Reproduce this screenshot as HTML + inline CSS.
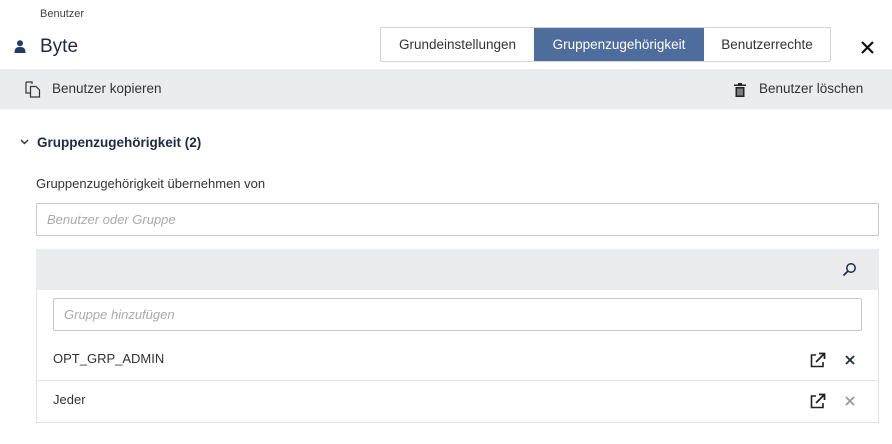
<!DOCTYPE html>
<html><head><meta charset="utf-8"><style>
*{box-sizing:border-box;margin:0;padding:0}
body{width:892px;height:444px;background:#fff;font-family:"Liberation Sans",sans-serif;color:#2a2a2a;position:relative;overflow:hidden;font-size:13px}
.a{position:absolute}
.tabs{left:380px;top:27px;height:35px;display:flex;border:1px solid #d4d4d4;border-radius:2px}
.tabs div{text-align:center;line-height:33px;font-size:13.5px;color:#333}
.tabs .on{background:#4f6d9c;color:#fff}
.bar{left:0;top:69px;width:892px;height:40px;background:#ebeced}
.inp{border:1px solid #c8c8c8;border-radius:2px;height:33px;font-style:italic;color:#aaa;font-size:13px;padding-left:10px;line-height:31px}
</style></head><body>
<div class="a" style="left:40px;top:8px;font-size:11px;color:#444">Benutzer</div>
<svg class="a" style="left:14px;top:40px" width="12" height="13" viewBox="0 0 12 13"><circle cx="6" cy="3.3" r="3" fill="#1f3d66"/><path d="M0.5 13 C0.5 8 2.5 7 6 7 C9.5 7 11.5 8 11.5 13Z" fill="#1f3d66"/></svg>
<div class="a" style="left:40px;top:36px;font-size:19px;color:#1e2b44">Byte</div>
<div class="a tabs"><div style="width:153px">Grundeinstellungen</div><div class="on" style="width:170px">Gruppenzugehörigkeit</div><div style="width:126px">Benutzerrechte</div></div>
<svg class="a" style="left:860px;top:40px" width="15" height="15" viewBox="0 0 15 15"><path d="M2 2L13 13M13 2L2 13" stroke="#111" stroke-width="2.2"/></svg>
<div class="a bar"></div>
<svg class="a" style="left:25px;top:81px" width="16" height="17" viewBox="0 0 16 17"><path d="M1 1H7V3M1 1V12H5" fill="none" stroke="#333" stroke-width="1.2"/><path d="M5.5 5.5H11L14.5 9V16H5.5Z" fill="none" stroke="#333" stroke-width="1.2"/></svg>
<div class="a" style="left:52px;top:81px;font-size:13.5px;color:#333">Benutzer kopieren</div>
<svg class="a" style="left:734px;top:83px" width="12" height="14" viewBox="0 0 12 14"><rect x="0" y="1.5" width="12" height="1.5" fill="#222"/><rect x="4" y="0" width="4" height="2" fill="#222"/><path d="M1.5 4H10.5V14H1.5Z" fill="#222"/><path d="M4 5.5V12.5M6 5.5V12.5M8 5.5V12.5" stroke="#ebeced" stroke-width="0.9"/></svg>
<div class="a" style="left:759px;top:81px;font-size:13.5px;color:#333">Benutzer löschen</div>
<svg class="a" style="left:20px;top:139px" width="9" height="6" viewBox="0 0 9 6"><path d="M1 1L4.5 4.5L8 1" fill="none" stroke="#333" stroke-width="1.4"/></svg>
<div class="a" style="left:37px;top:135px;font-size:13.5px;font-weight:bold;color:#1e2b44">Gruppenzugehörigkeit (2)</div>
<div class="a" style="left:36px;top:176px;font-size:13px;color:#333">Gruppenzugehörigkeit übernehmen von</div>
<div class="a inp" style="left:36px;top:203px;width:843px">Benutzer oder Gruppe</div>
<div class="a" style="left:36px;top:249px;width:843px;height:174px;border:1px solid #e2e2e2;border-top:none"></div>
<div class="a" style="left:36px;top:249px;width:843px;height:41px;background:#ebeced"></div>
<svg class="a" style="left:842px;top:262px" width="15" height="15" viewBox="0 0 15 15"><circle cx="9" cy="6" r="4.2" fill="none" stroke="#1e2b44" stroke-width="1.5"/><path d="M6 9L1.5 13.5" stroke="#1e2b44" stroke-width="1.7"/></svg>
<div class="a inp" style="left:53px;top:298px;width:809px">Gruppe hinzufügen</div>
<div class="a" style="left:53px;top:351px;font-size:13px;color:#333">OPT_GRP_ADMIN</div>
<div class="a" style="left:37px;top:380px;width:841px;border-top:1px solid #e2e2e2"></div>
<div class="a" style="left:53px;top:392px;font-size:13px;color:#333">Jeder</div>
<svg class="a" style="left:810px;top:352px" width="16" height="16" viewBox="0 0 16 16"><path d="M6 3H1.5V14.5H13V10" fill="none" stroke="#222" stroke-width="1.6"/><path d="M6 10L14 2M9 1.5H14.5V7" fill="none" stroke="#222" stroke-width="1.8"/></svg>
<svg class="a" style="left:810px;top:393px" width="16" height="16" viewBox="0 0 16 16"><path d="M6 3H1.5V14.5H13V10" fill="none" stroke="#222" stroke-width="1.6"/><path d="M6 10L14 2M9 1.5H14.5V7" fill="none" stroke="#222" stroke-width="1.8"/></svg>
<svg class="a" style="left:845px;top:355px" width="10" height="10" viewBox="0 0 10 10"><path d="M1 1L9 9M9 1L1 9" stroke="#1e2b44" stroke-width="1.8"/></svg>
<svg class="a" style="left:845px;top:396px" width="10" height="10" viewBox="0 0 10 10"><path d="M1 1L9 9M9 1L1 9" stroke="#999" stroke-width="1.8"/></svg>
</body></html>
